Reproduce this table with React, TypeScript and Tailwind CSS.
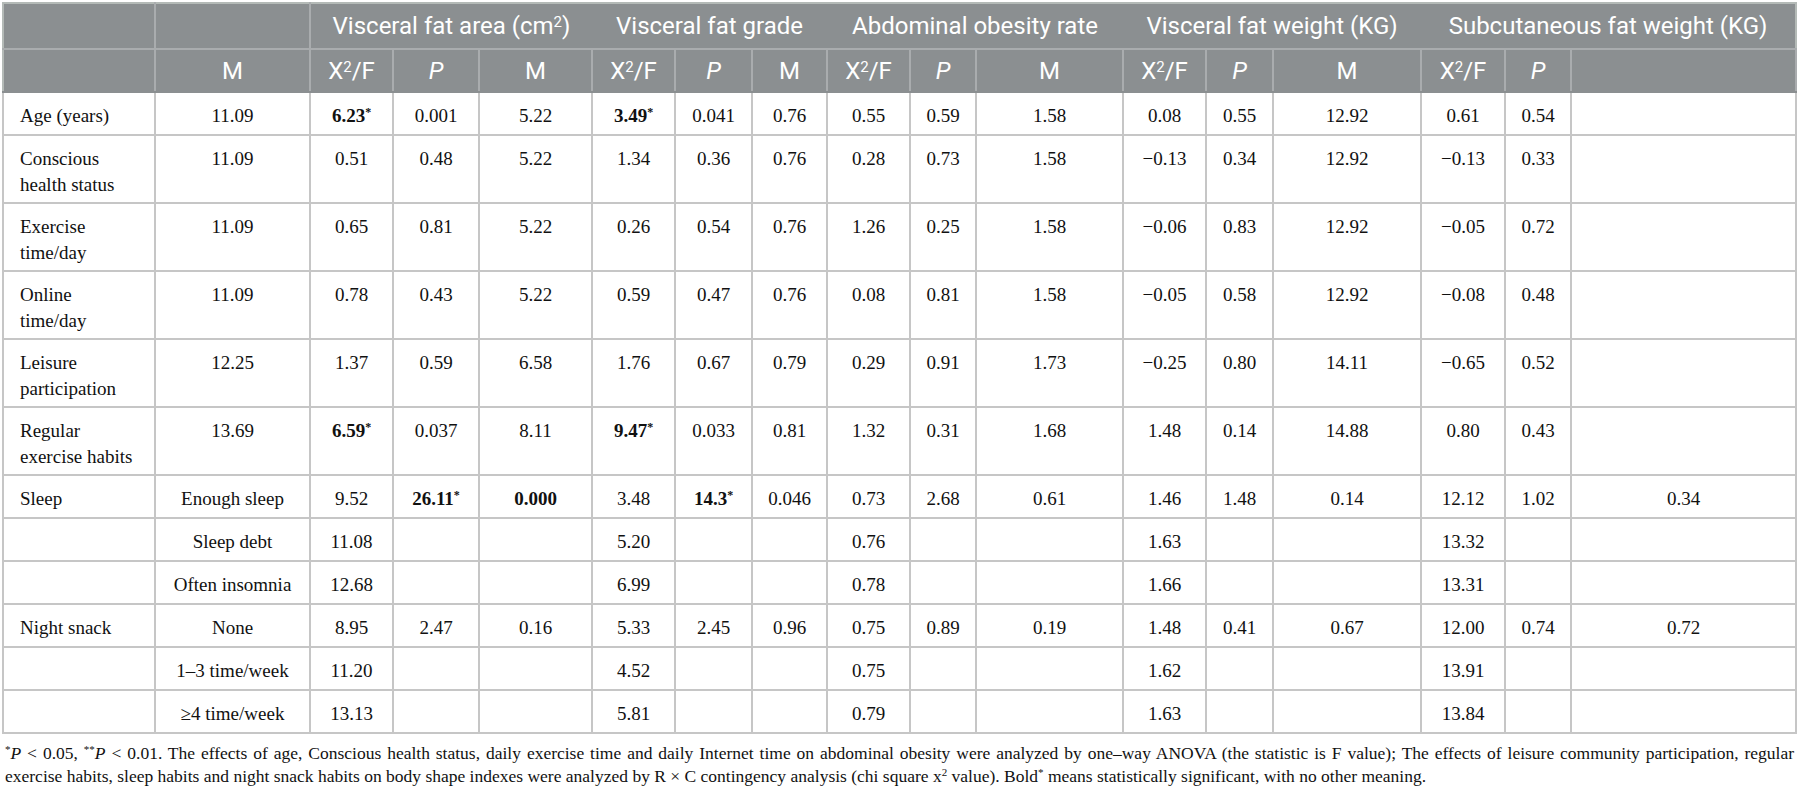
import React from "react";

const widths = [
  "w-[152px]",
  "w-[155px]",
  "w-[83px]",
  "w-[86px]",
  "w-[113px]",
  "w-[83px]",
  "w-[77px]",
  "w-[75px]",
  "w-[83px]",
  "w-[66px]",
  "w-[147px]",
  "w-[83px]",
  "w-[67px]",
  "w-[148px]",
  "w-[84px]",
  "w-[66px]",
  "w-[225px]",
];

const groups = [
  "Visceral fat area (cm2)",
  "Visceral fat grade",
  "Abdominal obesity rate",
  "Visceral fat weight (KG)",
  "Subcutaneous fat weight (KG)",
];

const subHeads = ["M", "X2/F", "P", "M", "X2/F", "P", "M", "X2/F", "P", "M", "X2/F", "P", "M", "X2/F", "P", ""];

const BOLD = new Set(["0.000"]);

type Row = { label: React.ReactNode; tall?: boolean; cells: string[] };

const rows: Row[] = [
  {
    label: "Age (years)",
    cells: ["11.09", "6.23*", "0.001", "5.22", "3.49*", "0.041", "0.76", "0.55", "0.59", "1.58", "0.08", "0.55", "12.92", "0.61", "0.54", ""],
  },
  {
    label: (
      <>
        Conscious
        <br />
        health status
      </>
    ),
    tall: true,
    cells: ["11.09", "0.51", "0.48", "5.22", "1.34", "0.36", "0.76", "0.28", "0.73", "1.58", "−0.13", "0.34", "12.92", "−0.13", "0.33", ""],
  },
  {
    label: (
      <>
        Exercise
        <br />
        time/day
      </>
    ),
    tall: true,
    cells: ["11.09", "0.65", "0.81", "5.22", "0.26", "0.54", "0.76", "1.26", "0.25", "1.58", "−0.06", "0.83", "12.92", "−0.05", "0.72", ""],
  },
  {
    label: (
      <>
        Online
        <br />
        time/day
      </>
    ),
    tall: true,
    cells: ["11.09", "0.78", "0.43", "5.22", "0.59", "0.47", "0.76", "0.08", "0.81", "1.58", "−0.05", "0.58", "12.92", "−0.08", "0.48", ""],
  },
  {
    label: (
      <>
        Leisure
        <br />
        participation
      </>
    ),
    tall: true,
    cells: ["12.25", "1.37", "0.59", "6.58", "1.76", "0.67", "0.79", "0.29", "0.91", "1.73", "−0.25", "0.80", "14.11", "−0.65", "0.52", ""],
  },
  {
    label: (
      <>
        Regular
        <br />
        exercise habits
      </>
    ),
    tall: true,
    cells: ["13.69", "6.59*", "0.037", "8.11", "9.47*", "0.033", "0.81", "1.32", "0.31", "1.68", "1.48", "0.14", "14.88", "0.80", "0.43", ""],
  },
  {
    label: "Sleep",
    cells: ["Enough sleep", "9.52", "26.11*", "0.000", "3.48", "14.3*", "0.046", "0.73", "2.68", "0.61", "1.46", "1.48", "0.14", "12.12", "1.02", "0.34"],
  },
  {
    label: "",
    cells: ["Sleep debt", "11.08", "", "", "5.20", "", "", "0.76", "", "", "1.63", "", "", "13.32", "", ""],
  },
  {
    label: "",
    cells: ["Often insomnia", "12.68", "", "", "6.99", "", "", "0.78", "", "", "1.66", "", "", "13.31", "", ""],
  },
  {
    label: "Night snack",
    cells: ["None", "8.95", "2.47", "0.16", "5.33", "2.45", "0.96", "0.75", "0.89", "0.19", "1.48", "0.41", "0.67", "12.00", "0.74", "0.72"],
  },
  {
    label: "",
    cells: ["1–3 time/week", "11.20", "", "", "4.52", "", "", "0.75", "", "", "1.62", "", "", "13.91", "", ""],
  },
  {
    label: "",
    cells: ["≥4 time/week", "13.13", "", "", "5.81", "", "", "0.79", "", "", "1.63", "", "", "13.84", "", ""],
  },
];

const cellText = "font-['Liberation_Serif',serif] text-[19px] leading-[26px] text-[#111]";

function HeadText({ text }: { text: string }) {
  if (text === "P") return <span className="italic">P</span>;
  if (text.includes("2")) {
    const [a, b] = text.split("2");
    return (
      <>
        {a}
        <span className="text-[15px] align-top leading-[22px]">2</span>
        {b}
      </>
    );
  }
  return <>{text}</>;
}

function Value({ v }: { v: string }) {
  if (v.endsWith("*")) {
    return (
      <span className="font-bold">
        {v.slice(0, -1)}
        <span className="text-[12px] align-top leading-[18px]">*</span>
      </span>
    );
  }
  if (BOLD.has(v)) return <span className="font-bold">{v}</span>;
  return <>{v}</>;
}

function Sup({ children }: { children: React.ReactNode }) {
  return <span className="relative -top-[6px] text-[11px] leading-none">{children}</span>;
}

export default function App() {
  return (
    <div className="bg-white pl-[2px] pt-[2px] w-[1798px] min-h-[787px]">
      <table className="table-fixed border-collapse w-[1794px] border-2 border-[#b4bab7]">
        <colgroup>
          {widths.map((w, i) => (
            <col key={i} className={w} />
          ))}
        </colgroup>
        <thead className="bg-[#8b8f91] text-white font-['Roboto',sans-serif] text-[24px] leading-[30px]">
          <tr className="h-[46px]">
            <th className="border-r-2 border-b-2 border-[#a9acae] font-normal" />
            <th className="border-r-2 border-b-2 border-[#a9acae] font-normal" />
            {groups.map((g) => (
              <th key={g} colSpan={3} className="border-b-2 border-[#a9acae] font-normal text-center align-middle whitespace-nowrap">
                <HeadText text={g} />
              </th>
            ))}
          </tr>
          <tr className="h-[43px]">
            <th className="border-r-2 border-b-2 border-r-[#a9acae] border-b-[#8b8f91] font-normal" />
            {subHeads.map((h, i) => (
              <th
                key={i}
                className="border-r-2 border-b-2 border-r-[#a9acae] border-b-[#8b8f91] font-normal text-center align-middle"
              >
                <HeadText text={h} />
              </th>
            ))}
          </tr>
        </thead>
        <tbody>
          {rows.map((r, ri) => (
            <tr key={ri} className={r.tall ? "h-[68px]" : "h-[43px]"}>
              <td className={`${cellText} border-2 border-[#c6c6c6] align-top pt-[10px] pl-[16px] text-left`}>{r.label}</td>
              {r.cells.map((c, ci) => (
                <td key={ci} className={`${cellText} border-2 border-[#c6c6c6] align-top pt-[10px] text-center whitespace-nowrap`}>
                  <Value v={c} />
                </td>
              ))}
            </tr>
          ))}
        </tbody>
      </table>
      <p className="mt-[8px] w-[1794px] pl-[3px] pr-[2px] font-['Liberation_Serif',serif] text-[17.5px] leading-[23px] text-[#111] text-justify">
        <Sup>*</Sup>
        <span className="italic">P</span> &lt; 0.05, <Sup>**</Sup>
        <span className="italic">P</span> &lt; 0.01. The effects of age, Conscious health status, daily exercise time and daily
        Internet time on abdominal obesity were analyzed by one–way ANOVA (the statistic is F value); The effects of leisure
        community participation, regular exercise habits, sleep habits and night snack habits on body shape indexes were analyzed
        by R × C contingency analysis (chi square x<Sup>2</Sup> value). Bold<Sup>*</Sup> means statistically significant, with no
        other meaning.
      </p>
    </div>
  );
}
